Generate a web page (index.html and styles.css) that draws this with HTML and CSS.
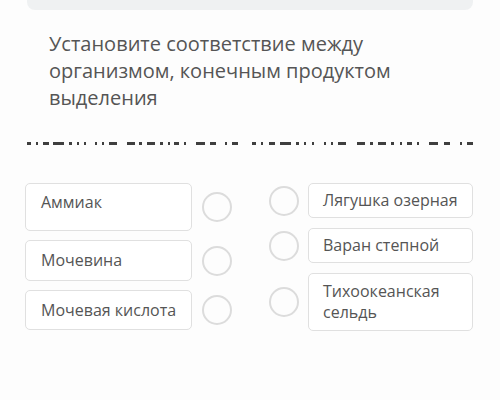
FILE: index.html
```html
<!DOCTYPE html>
<html lang="ru">
<head>
<meta charset="utf-8">
<link rel="stylesheet" href="styles.css">
</head>
<body>
<div class="top-bar"></div>
<h1 class="question">Установите соответствие между организмом, конечным продуктом выделения</h1>
<div class="divider">
  <div class="dash-group left">
    <i style="width:4px"></i><i style="width:2px"></i><i style="width:6px"></i><i style="width:11px"></i><i style="width:3px"></i><i style="width:2px"></i><i style="width:2px" class="wide"></i><i style="width:2px"></i><i style="width:2px"></i><i style="width:8px" class="wide"></i><i style="width:8px"></i><i style="width:3px"></i><i style="width:8px"></i><i style="width:3px"></i><i style="width:2px"></i><i style="width:5px"></i><i style="width:2px" class="wide"></i><i style="width:9px"></i><i style="width:6px" class="wide"></i><i style="width:2px"></i><i style="width:6px"></i>
  </div>
  <div class="dash-group right">
    <i style="width:4px"></i><i style="width:2px"></i><i style="width:6px"></i><i style="width:11px"></i><i style="width:3px"></i><i style="width:2px"></i><i style="width:2px" class="wide"></i><i style="width:2px"></i><i style="width:2px"></i><i style="width:8px" class="wide"></i><i style="width:8px"></i><i style="width:3px"></i><i style="width:8px"></i><i style="width:3px"></i><i style="width:2px"></i><i style="width:5px"></i><i style="width:2px" class="wide"></i><i style="width:9px"></i><i style="width:6px" class="wide"></i><i style="width:2px"></i><i style="width:6px"></i>
  </div>
</div>
<div class="match">
  <div class="col">
    <div class="item h48"><div class="box top">Аммиак</div><span class="dot"></span></div>
    <div class="item h41"><div class="box">Мочевина</div><span class="dot"></span></div>
    <div class="item h40"><div class="box">Мочевая кислота</div><span class="dot"></span></div>
  </div>
  <div class="col right">
    <div class="item h35"><span class="dot"></span><div class="box">Лягушка озерная</div></div>
    <div class="item h35"><span class="dot"></span><div class="box">Варан степной</div></div>
    <div class="item h58"><span class="dot"></span><div class="box">Тихоокеанская сельдь</div></div>
  </div>
</div>
</body>
</html>
```
FILE: styles.css
```css
body {
  margin: 0;
  background: #fdfdfd;
  font-family: "Open Sans", "Noto Sans", sans-serif;
  color: #555;
}
.top-bar {
  margin: 0 27px;
  height: 10px;
  background: #eff1f2;
  border-radius: 0 0 8px 8px;
}
.question {
  margin: 20px 0 0 49px;
  width: 400px;
  font-size: 20px;
  font-weight: 400;
  line-height: 27px;
  color: #555;
}
.divider {
  margin: 31px 27px 0 27px;
  display: flex;
  justify-content: space-between;
  height: 3px;
}
.dash-group {
  display: flex;
  justify-content: space-between;
}
.dash-group.left { width: 211px; }
.dash-group.right { width: 221px; }
.dash-group i {
  display: block;
  height: 3px;
  background: #3f3f3f;
}
.dash-group i.wide {
  margin-right: 5px;
}
.match {
  margin-top: 38px;
  padding-left: 25px;
  display: flex;
  gap: 37px;
}
.col {
  width: 207px;
  display: flex;
  flex-direction: column;
  gap: 9px;
}
.item {
  display: flex;
  align-items: center;
  gap: 10px;
}
.col.right {
  width: 204px;
  gap: 10px;
}
.col.right .item {
  gap: 9px;
}
.col.right .box {
  padding-left: 14px;
}
.box {
  box-sizing: border-box;
  flex: 1;
  align-self: stretch;
  display: flex;
  align-items: center;
  padding: 0 12px 0 15px;
  border: 1px solid #e0e0e0;
  border-radius: 5px;
  background: #fff;
  font-size: 16px;
  line-height: 21px;
  color: #555;
}
.box.top {
  align-items: flex-start;
  padding-top: 8px;
}
.dot {
  box-sizing: border-box;
  flex: none;
  width: 30px;
  height: 30px;
  border: 2px solid #dcdcdc;
  border-radius: 50%;
}
.h48 { height: 48px; }
.h41 { height: 41px; }
.h40 { height: 40px; }
.h35 { height: 35px; }
.h58 { height: 58px; }
```
